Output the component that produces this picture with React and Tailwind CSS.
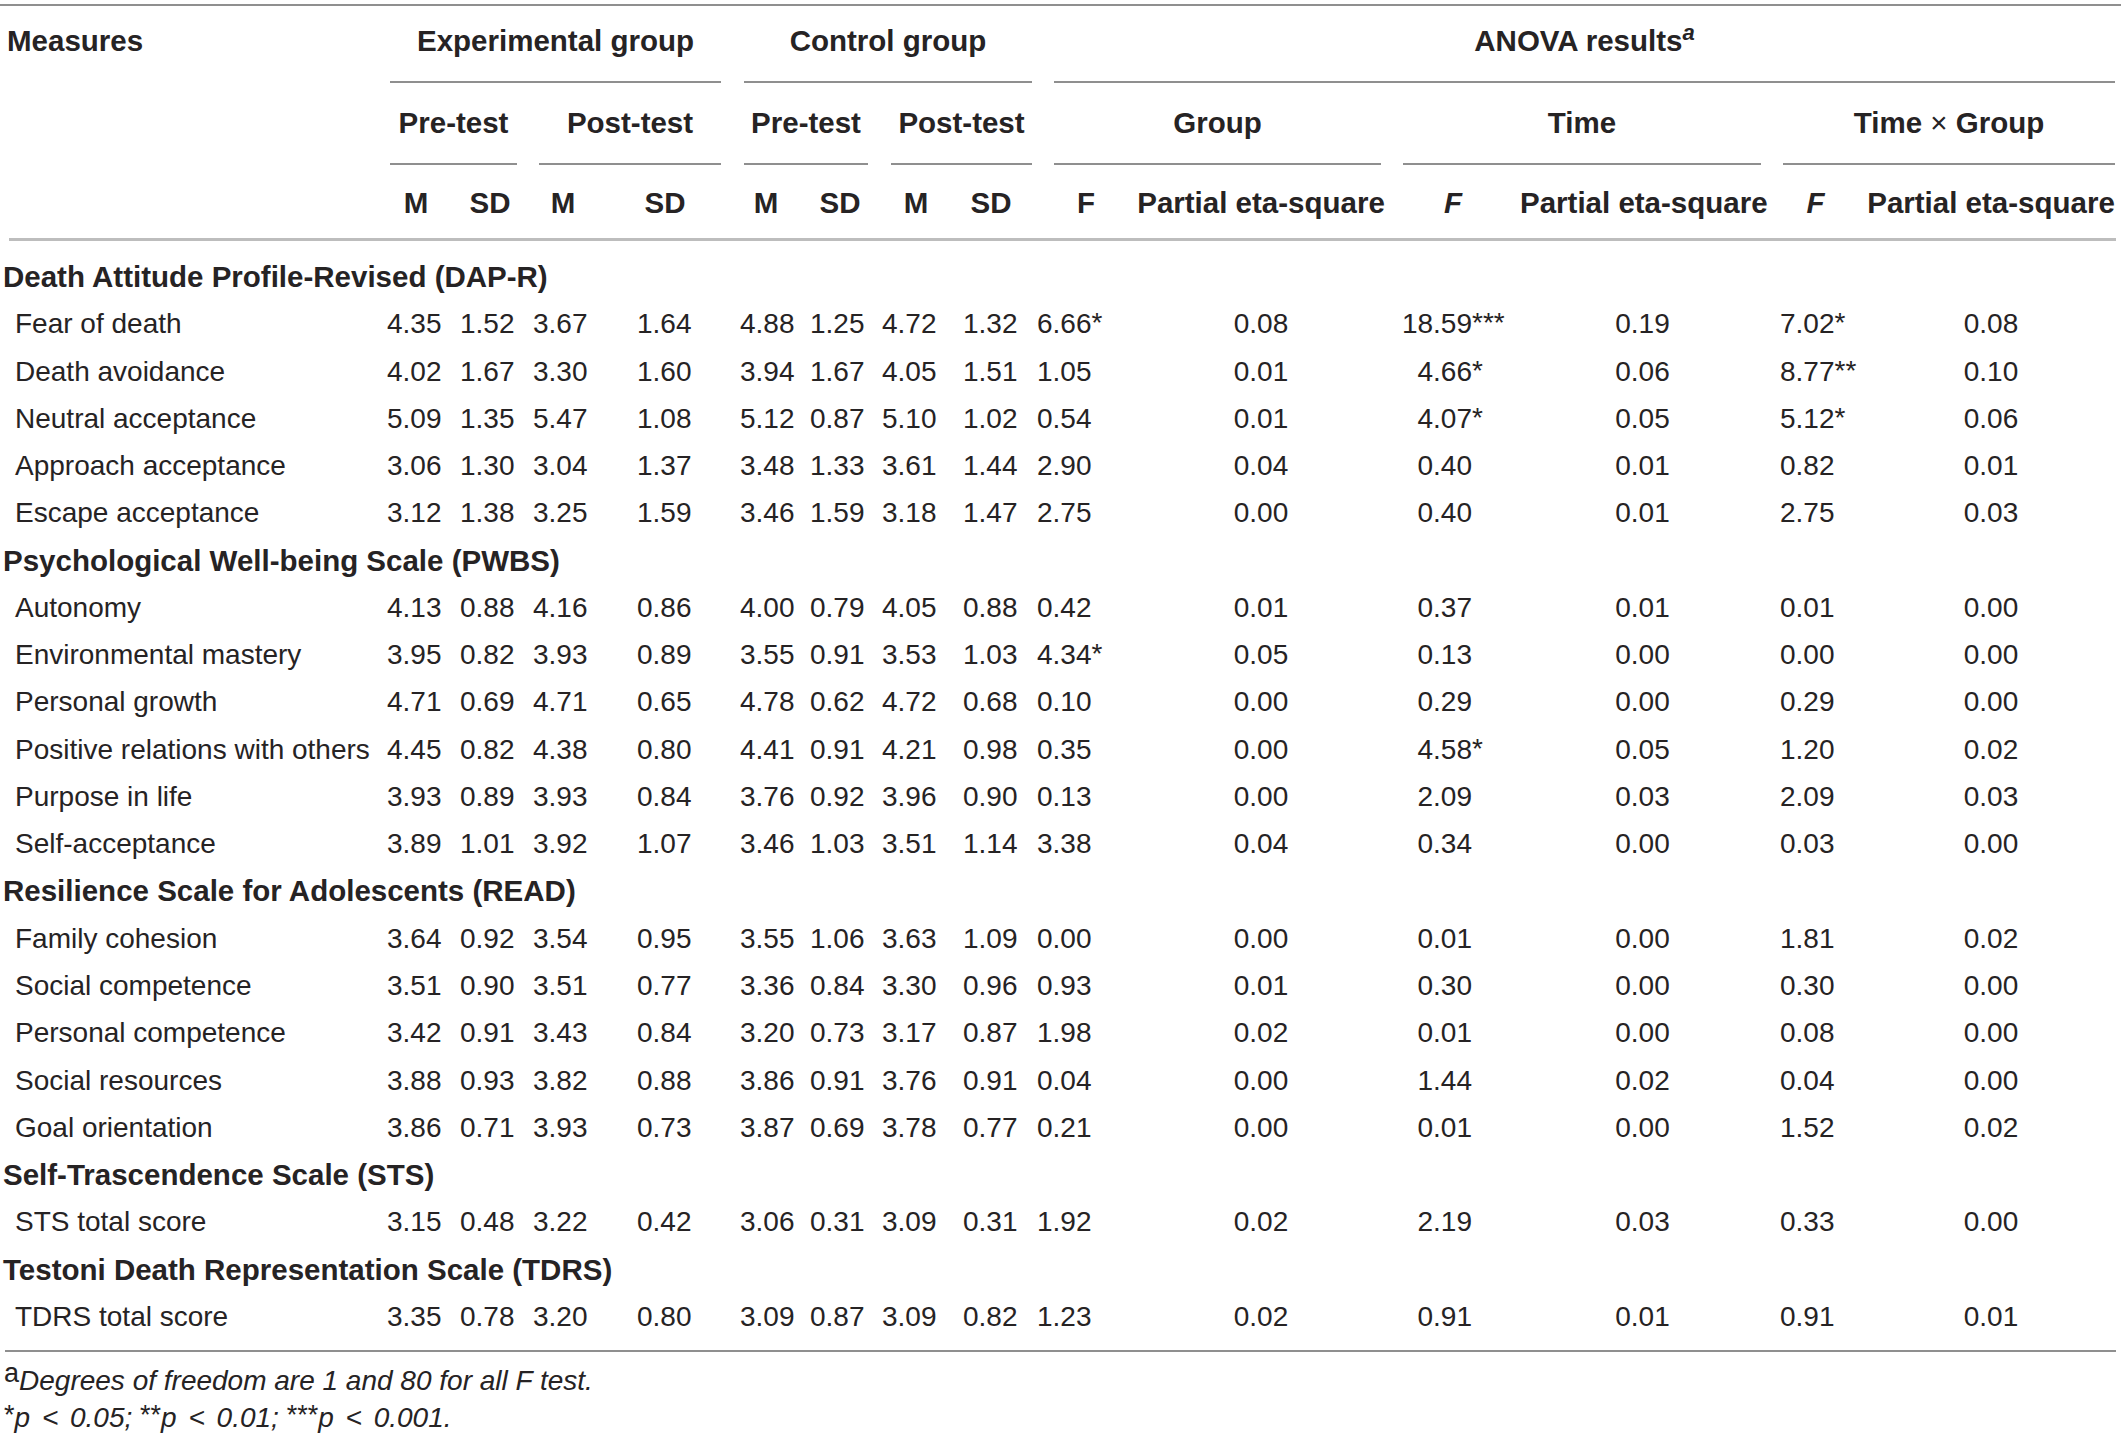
const sections = [
  {
    title: "Death Attitude Profile-Revised (DAP-R)",
    rows: [
      ["Fear of death", "4.35", "1.52", "3.67", "1.64", "4.88", "1.25", "4.72", "1.32", "6.66*", "0.08", "18.59***", "0.19", "7.02*", "0.08"],
      ["Death avoidance", "4.02", "1.67", "3.30", "1.60", "3.94", "1.67", "4.05", "1.51", "1.05", "0.01", "4.66*", "0.06", "8.77**", "0.10"],
      ["Neutral acceptance", "5.09", "1.35", "5.47", "1.08", "5.12", "0.87", "5.10", "1.02", "0.54", "0.01", "4.07*", "0.05", "5.12*", "0.06"],
      ["Approach acceptance", "3.06", "1.30", "3.04", "1.37", "3.48", "1.33", "3.61", "1.44", "2.90", "0.04", "0.40", "0.01", "0.82", "0.01"],
      ["Escape acceptance", "3.12", "1.38", "3.25", "1.59", "3.46", "1.59", "3.18", "1.47", "2.75", "0.00", "0.40", "0.01", "2.75", "0.03"]
    ]
  },
  {
    title: "Psychological Well-being Scale (PWBS)",
    rows: [
      ["Autonomy", "4.13", "0.88", "4.16", "0.86", "4.00", "0.79", "4.05", "0.88", "0.42", "0.01", "0.37", "0.01", "0.01", "0.00"],
      ["Environmental mastery", "3.95", "0.82", "3.93", "0.89", "3.55", "0.91", "3.53", "1.03", "4.34*", "0.05", "0.13", "0.00", "0.00", "0.00"],
      ["Personal growth", "4.71", "0.69", "4.71", "0.65", "4.78", "0.62", "4.72", "0.68", "0.10", "0.00", "0.29", "0.00", "0.29", "0.00"],
      ["Positive relations with others", "4.45", "0.82", "4.38", "0.80", "4.41", "0.91", "4.21", "0.98", "0.35", "0.00", "4.58*", "0.05", "1.20", "0.02"],
      ["Purpose in life", "3.93", "0.89", "3.93", "0.84", "3.76", "0.92", "3.96", "0.90", "0.13", "0.00", "2.09", "0.03", "2.09", "0.03"],
      ["Self-acceptance", "3.89", "1.01", "3.92", "1.07", "3.46", "1.03", "3.51", "1.14", "3.38", "0.04", "0.34", "0.00", "0.03", "0.00"]
    ]
  },
  {
    title: "Resilience Scale for Adolescents (READ)",
    rows: [
      ["Family cohesion", "3.64", "0.92", "3.54", "0.95", "3.55", "1.06", "3.63", "1.09", "0.00", "0.00", "0.01", "0.00", "1.81", "0.02"],
      ["Social competence", "3.51", "0.90", "3.51", "0.77", "3.36", "0.84", "3.30", "0.96", "0.93", "0.01", "0.30", "0.00", "0.30", "0.00"],
      ["Personal competence", "3.42", "0.91", "3.43", "0.84", "3.20", "0.73", "3.17", "0.87", "1.98", "0.02", "0.01", "0.00", "0.08", "0.00"],
      ["Social resources", "3.88", "0.93", "3.82", "0.88", "3.86", "0.91", "3.76", "0.91", "0.04", "0.00", "1.44", "0.02", "0.04", "0.00"],
      ["Goal orientation", "3.86", "0.71", "3.93", "0.73", "3.87", "0.69", "3.78", "0.77", "0.21", "0.00", "0.01", "0.00", "1.52", "0.02"]
    ]
  },
  {
    title: "Self-Trascendence Scale (STS)",
    rows: [
      ["STS total score", "3.15", "0.48", "3.22", "0.42", "3.06", "0.31", "3.09", "0.31", "1.92", "0.02", "2.19", "0.03", "0.33", "0.00"]
    ]
  },
  {
    title: "Testoni Death Representation Scale (TDRS)",
    rows: [
      ["TDRS total score", "3.35", "0.78", "3.20", "0.80", "3.09", "0.87", "3.09", "0.82", "1.23", "0.02", "0.91", "0.01", "0.91", "0.01"]
    ]
  }
];

// padding / alignment of each value column
const valueCls = [
  "pl-[7px]",
  "pl-[8px]",
  "pl-[5px]",
  "pl-[39px]",
  "pl-[8px]",
  "pl-[10px]",
  "pl-[2px]",
  "pl-[11px]",
  "pl-[7px]",
  "text-center",
  "text-right pr-[48px]",
  "text-center",
  "pl-[15px]",
  "text-center"
];

function Num({ value }) {
  const n = value.replace(/\*/g, "");
  const stars = value.slice(n.length);
  return (
    <span className="relative">
      {n}
      {stars && <span className="absolute left-full top-[1px] leading-none">{stars}</span>}
    </span>
  );
}

const head = "font-bold text-[29.5px] leading-[34px] whitespace-nowrap";

export default function App() {
  return (
    <div className="w-[2121px] bg-white pt-[4px] text-[28px] text-[#262324] font-['Liberation_Sans',Arial,sans-serif]">
      <div className="h-[2px] bg-[#8f8f8f]" />
      <div className="grid grid-cols-[380px_72px_76px_70px_134px_68px_80px_72px_78px_100px_262px_128px_245px_101px_250px] items-start">
        {/* header row 1 */}
        <div className={`row-span-3 pl-[7px] pt-[18px] ${head}`}>Measures</div>
        <div className={`col-span-4 ml-[10px] mr-[11px] border-b-2 border-[#8f8f8f] pt-[18px] pb-[23px] text-center ${head}`}>
          Experimental group
        </div>
        <div className={`col-span-4 ml-[12px] mr-[-2px] border-b-2 border-[#8f8f8f] pt-[18px] pb-[23px] text-center ${head}`}>
          Control group
        </div>
        <div className={`col-span-6 ml-[24px] mr-[1px] border-b-2 border-[#8f8f8f] pt-[18px] pb-[23px] text-center ${head}`}>
          ANOVA results<sup className="italic text-[22px]">a</sup>
        </div>

        {/* header row 2 */}
        <div className={`col-span-2 ml-[10px] mr-[11px] border-b-2 border-[#8f8f8f] pt-[23px] pb-[23px] text-center ${head}`}>Pre-test</div>
        <div className={`col-span-2 ml-[11px] mr-[11px] border-b-2 border-[#8f8f8f] pt-[23px] pb-[23px] text-center ${head}`}>Post-test</div>
        <div className={`col-span-2 ml-[12px] mr-[12px] border-b-2 border-[#8f8f8f] pt-[23px] pb-[23px] text-center ${head}`}>Pre-test</div>
        <div className={`col-span-2 ml-[11px] mr-[-2px] border-b-2 border-[#8f8f8f] pt-[23px] pb-[23px] text-center ${head}`}>Post-test</div>
        <div className={`col-span-2 ml-[24px] mr-[11px] border-b-2 border-[#8f8f8f] pt-[23px] pb-[23px] text-center ${head}`}>Group</div>
        <div className={`col-span-2 ml-[11px] mr-[4px] border-b-2 border-[#8f8f8f] pt-[23px] pb-[23px] text-center ${head}`}>Time</div>
        <div className={`col-span-2 ml-[18px] mr-[1px] border-b-2 border-[#8f8f8f] pt-[23px] pb-[23px] text-center ${head}`}>
          Time <span className="font-normal">×</span> Group
        </div>

        {/* header row 3 */}
        {["M", "SD", "M", "SD", "M", "SD", "M", "SD"].map((h, i) => (
          <div key={i} className={`h-[73px] pt-[21px] text-center ${head}`}>
            {h}
          </div>
        ))}
        <div className={`h-[73px] pl-[12px] pt-[21px] text-center ${head}`}>F</div>
        <div className={`h-[73px] pt-[21px] text-center ${head}`}>Partial eta-square</div>
        <div className={`h-[73px] pr-[6px] pt-[21px] text-center italic ${head}`}>F</div>
        <div className={`h-[73px] pt-[21px] text-center ${head}`}>Partial eta-square</div>
        <div className={`h-[73px] pt-[21px] text-center italic ${head}`}>F</div>
        <div className={`h-[73px] pt-[21px] text-center ${head}`}>Partial eta-square</div>

        <div className="col-span-15 ml-[9px] mb-[12px] h-[3px] bg-[#bdbdbd]" />

        {/* body */}
        {sections.map((s) => (
          <div key={s.title} className="contents">
            <div className="col-span-15 pl-[3px] font-bold text-[29.5px] leading-[47.27px] whitespace-nowrap">{s.title}</div>
            {s.rows.map((r) => (
              <div key={r[0]} className="contents">
                <div className="pl-[15px] leading-[47.27px] whitespace-nowrap">{r[0]}</div>
                {r.slice(1).map((v, i) => (
                  <div key={i} className={`leading-[47.27px] whitespace-nowrap ${valueCls[i]}`}>
                    <Num value={v} />
                  </div>
                ))}
              </div>
            ))}
          </div>
        ))}

        <div className="col-span-15 ml-[5px] mt-[10px] h-[2px] bg-[#8f8f8f]" />
      </div>

      {/* footnotes */}
      <div className="mt-[10px] pl-[4px] leading-[37px]">
        <p>
          <sup className="text-[27px] top-[-0.3em]">a</sup>
          <span className="italic">Degrees of freedom are 1 and 80 for all F test.</span>
        </p>
        <p className="italic">
          <sup className="not-italic text-[27px] top-[-0.1em]">*</sup>p <span className="mx-[4px]">&lt;</span> 0.05;{" "}
          <sup className="not-italic text-[27px] top-[-0.1em]">**</sup>p <span className="mx-[4px]">&lt;</span> 0.01;{" "}
          <sup className="not-italic text-[27px] top-[-0.1em]">***</sup>p <span className="mx-[4px]">&lt;</span> 0.001.
        </p>
      </div>
    </div>
  );
}
